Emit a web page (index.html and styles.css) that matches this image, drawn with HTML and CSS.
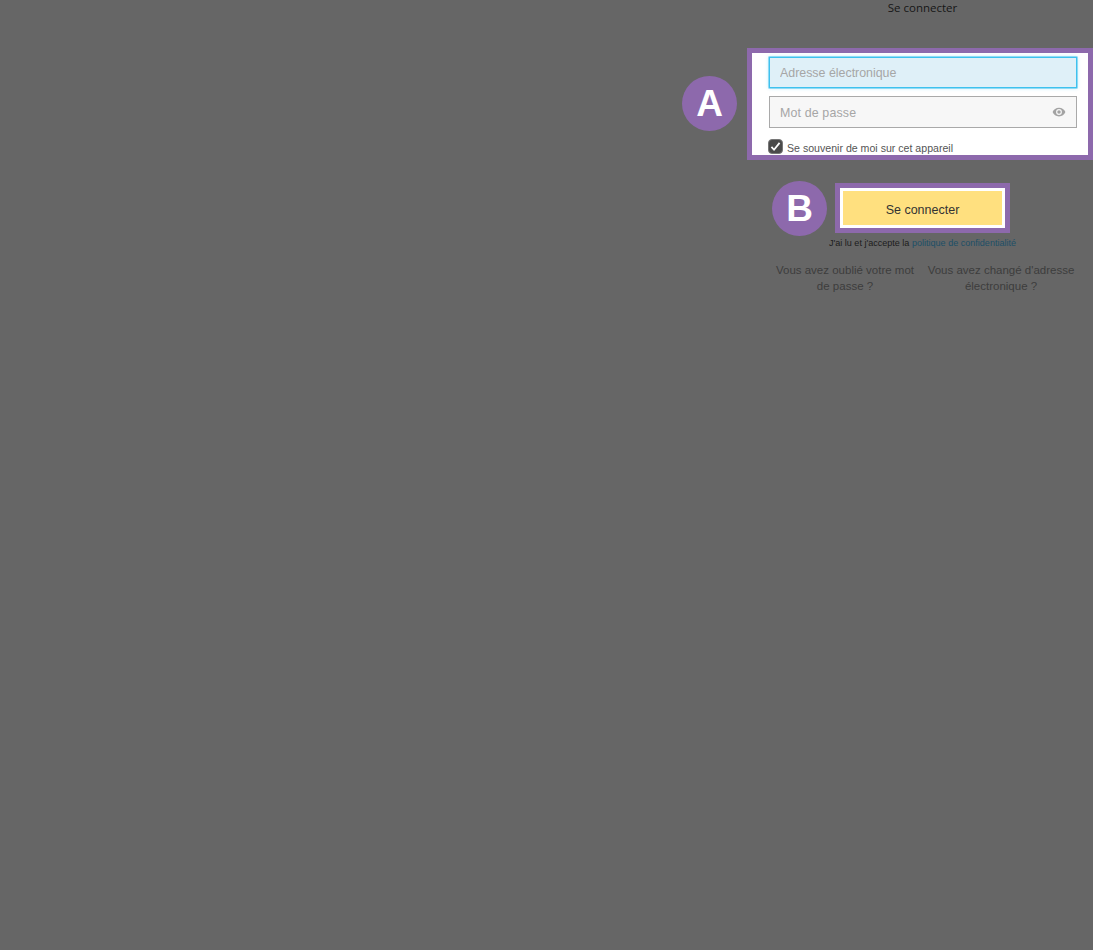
FILE: index.html
```html
<!DOCTYPE html>
<html lang="fr">
<head>
  <meta charset="UTF-8" />
  <title>Se connecter</title>
  <link rel="stylesheet" href="styles.css">
</head>
<body>
  <main class="login">
    <h1 class="login-title">Se connecter</h1>

    <form class="login-form">
      <div class="highlight highlight-fields">
        <span class="badge badge-a">A</span>
        <input class="field field-focus" type="text" placeholder="Adresse électronique" />
        <div class="field-wrap">
          <input class="field field-password" type="password" placeholder="Mot de passe" />
          <svg class="eye" viewBox="0 0 24 24" width="14" height="14">
            <path fill="#a3a3a3" d="M12 4.5C7 4.5 2.7 7.6 1 12c1.7 4.4 6 7.5 11 7.5s9.3-3.1 11-7.5c-1.7-4.4-6-7.5-11-7.5zM12 17a5 5 0 1 1 0-10 5 5 0 0 1 0 10zm0-8a3 3 0 1 0 0 6 3 3 0 0 0 0-6z"/>
          </svg>
        </div>
        <label class="remember">
          <span class="check">
            <svg viewBox="0 0 16 16" width="13" height="13">
              <path fill="none" stroke="#fff" stroke-width="2.2" d="M3 8.5l3.2 3.5L13 3.5"/>
            </svg>
          </span>
          <span class="remember-text">Se souvenir de moi sur cet appareil</span>
        </label>
      </div>

      <div class="submit-row">
        <div class="highlight highlight-button">
          <span class="badge badge-b">B</span>
          <button class="submit" type="button">Se connecter</button>
        </div>
      </div>

      <p class="privacy">J'ai lu et j'accepte la <a href="#">politique de confidentialité</a></p>

      <div class="help-links">
        <a href="#">Vous avez oublié votre mot de passe ?</a>
        <a href="#">Vous avez changé d'adresse électronique ?</a>
      </div>
    </form>
  </main>
</body>
</html>
```

FILE: styles.css
```css
* {
  box-sizing: border-box;
  margin: 0;
  padding: 0;
}

body {
  background-color: #666;
  font-family: "Liberation Sans", Arial, sans-serif;
  height: 950px;
  overflow: hidden;
}

.login {
  width: 346px;
  margin-left: auto;
}

.login-title {
  height: 48px;
  padding: 0 0 0 5px;
  font-family: "Open Sans", sans-serif;
  font-size: 11.5px;
  font-weight: 400;
  line-height: 16px;
  text-align: center;
  color: #161616;
}

/* Cadres violets */
.highlight {
  position: relative;
  border: 5px solid #8d69ac;
  background-color: #fff;
}

.highlight-fields {
  height: 112px;
  padding: 4px 11px 0 17px;
}

.highlight-button {
  width: 175px;
  height: 50px;
  padding: 3px;
  border-width: 5px;
}

.badge {
  position: absolute;
  width: 55px;
  height: 55px;
  border-radius: 50%;
  background-color: #8d69ac;
  color: #fff;
  font-size: 37px;
  font-weight: bold;
  line-height: 55px;
  text-align: center;
}

.badge-a {
  left: -70px;
  top: 23px;
}

.badge-b {
  left: -68px;
  top: -7px;
}

/* Champs */
.field {
  display: block;
  width: 308px;
  height: 32px;
  padding: 0 10px;
  border: 1px solid #a9a9a9;
  background-color: #f7f7f7;
  font-family: "Liberation Sans", Arial, sans-serif;
  font-size: 12.4px;
  outline: none;
}

.field::placeholder {
  color: #a6a6a6;
  opacity: 1;
}

.field-focus {
  height: 31px;
  border-color: #3fc1ee;
  background-color: #dff0f8;
  box-shadow: 0 0 0 0.5px #3fc1ee, 0 0 4px rgba(63, 193, 238, 0.4);
}

.field-password {
  padding-top: 1px;
  letter-spacing: 0.15px;
}

.field-wrap {
  position: relative;
  margin-top: 8px;
}

.eye {
  position: absolute;
  right: 11px;
  top: 9px;
}

.remember {
  display: flex;
  align-items: flex-start;
  gap: 4px;
  margin: 11px 0 0 -1px;
  font-size: 10.6px;
  line-height: 15px;
  color: #555;
}

.remember-text {
  margin-top: 2px;
}

.check {
  display: flex;
  flex: none;
  align-items: center;
  justify-content: center;
  width: 15px;
  height: 15px;
  border: 1px solid #777;
  border-radius: 4px;
  background-color: #4a4a4a;
}

/* Bouton */
.submit-row {
  display: flex;
  padding: 23px 0 0 88px;
}

.submit {
  display: block;
  width: 100%;
  height: 100%;
  padding-top: 3px;
  border: none;
  background-color: #ffe07f;
  font-family: "Liberation Sans", Arial, sans-serif;
  font-size: 12.5px;
  color: #333;
}

.privacy {
  margin: 5px 0 0 82px;
  font-size: 9.05px;
  line-height: 11px;
  white-space: nowrap;
  color: #1c1c1c;
}

.privacy a {
  color: #1d4f66;
  text-decoration: none;
}

.help-links {
  display: flex;
  gap: 12px;
  margin: 13px 0 0 28px;
}

.help-links a {
  width: 140px;
  font-size: 11.5px;
  line-height: 16px;
  text-align: center;
  color: #3d3d3d;
  text-decoration: none;
}

.help-links a + a {
  width: 148px;
}
```
